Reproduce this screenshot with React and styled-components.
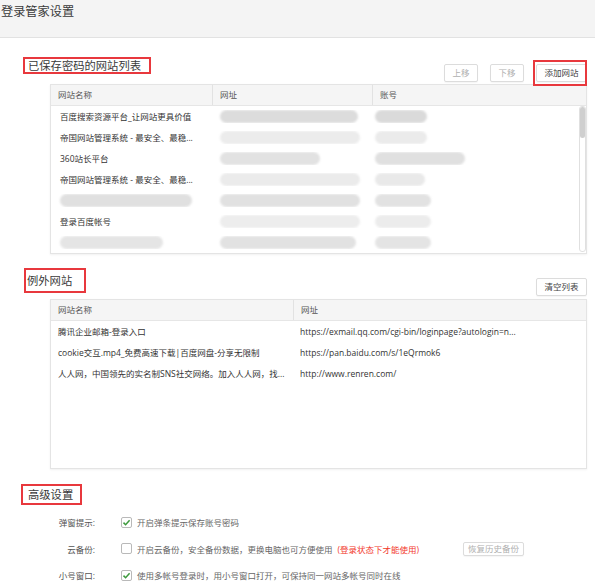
import React from "react";
import styled, { createGlobalStyle } from "styled-components";

const Global = createGlobalStyle`
  html, body { margin: 0; padding: 0; background: #fff; }
  body { font-family: "Open Sans", "Noto Sans CJK SC", sans-serif; color: #333; }
`;

const Page = styled.div`
  width: 595px;
  height: 586px;
  overflow: hidden;
  background: #fff;
`;

const TopBar = styled.header`
  height: 38px;
  box-sizing: border-box;
  background: #f4f4f4;
  border-bottom: 1px solid #e2e2e2;
  padding: 4px 0 0 1px;
  font-size: 12.2px;
  line-height: 16px;
  color: #3a3a3a;
`;

const Section = styled.section`
  padding: ${(p) => p.$pt}px 8px 0 0;
`;

const SectionHead = styled.div`
  display: flex;
  justify-content: space-between;
  align-items: flex-start;
  height: ${(p) => p.$h}px;
`;

const SectionTitle = styled.h2`
  margin: 0 0 0 ${(p) => p.$ml}px;
  font-weight: normal;
  font-size: 11.3px;
  color: #3a3a3a;
  border: 2px solid #e8383d;
  line-height: ${(p) => p.$lh}px;
  padding: 0 ${(p) => p.$pr}px 0 ${(p) => p.$pl}px;
  background: #fff;
`;

const Toolbar = styled.div`
  align-self: flex-end;
  margin-bottom: ${(p) => p.$mb}px;
  display: flex;
  gap: 12px;
`;

const Button = styled.button`
  position: relative;
  height: ${(p) => p.$h || 18}px;
  box-sizing: border-box;
  border: 1px solid #dcdcdc;
  border-radius: 2px;
  background: #fff;
  font-family: inherit;
  font-size: 8.5px;
  line-height: 1;
  color: ${(p) => (p.$disabled ? "#b0b0b0" : "#444")};
  padding: 0 7.5px;
  box-shadow: 0 1px 1px rgba(0, 0, 0, 0.04);
  ${(p) =>
    p.$marked &&
    `
    &::after {
      content: "";
      position: absolute;
      top: -5px; left: -4px; right: -1px; bottom: -5px;
      border: 2px solid #e8383d;
    }
  `}
`;

const Table = styled.div`
  margin-left: 50px;
  border: 1px solid #e4e4e4;
  box-shadow: 0 1px 2px rgba(0, 0, 0, 0.06);
  background: #fff;
`;

const HeadRow = styled.div`
  display: grid;
  grid-template-columns: ${(p) => p.$cols};
  height: 20px;
  background: #f5f5f5;
  border-bottom: 1px solid #e6e6e6;
`;

const HeadCell = styled.div`
  padding-left: 7px;
  font-size: 8.5px;
  line-height: 20px;
  color: #555;
  & + & {
    border-left: 1px solid #e2e2e2;
  }
`;

const Body = styled.div`
  display: flex;
  min-height: ${(p) => p.$minH || 0}px;
`;

const Rows = styled.div`
  flex: 1;
`;

const Row = styled.div`
  display: grid;
  grid-template-columns: ${(p) => p.$cols};
  height: 21px;
  align-items: center;
`;

const Cell = styled.div`
  padding-left: ${(p) => p.$pl ?? 8}px;
  font-size: 8.5px;
  line-height: 12px;
  color: #333;
  white-space: nowrap;
  overflow: hidden;
`;

const Blob = styled.span`
  display: block;
  height: 13px;
  width: ${(p) => p.$w}px;
  margin-left: ${(p) => p.$x || 0}px;
  background: ${(p) => p.$c};
  border-radius: 7px;
  filter: blur(0.8px);
`;

const Scroll = styled.div`
  width: 7px;
  margin: 0 0 1px 0;
  border: 1px solid #e0e0e0;
  border-radius: 3px;
  box-sizing: border-box;
  display: flex;
  flex-direction: column;
`;

const Thumb = styled.div`
  height: 31px;
  background: #cfcfcf;
  border-radius: 3px;
`;

const Settings = styled.div`
  margin-top: 4px;
`;

const SettingRow = styled.div`
  display: flex;
  align-items: center;
  height: 26.5px;
  font-size: 8.5px;
`;

const Label = styled.div`
  width: 95px;
  text-align: right;
  color: #555;
`;

const Check = styled.span`
  width: 11px;
  height: 11px;
  box-sizing: border-box;
  margin-left: 26px;
  border: 1px solid #b9b9b9;
  border-radius: 2px;
  background: #fff;
  display: flex;
  align-items: center;
  justify-content: center;
`;

const SettingText = styled.span`
  margin-left: 5px;
  color: #666;
`;

const Note = styled.span`
  margin-left: 5px;
  color: #f2382c;
`;

const SmallButton = styled(Button)`
  margin-left: 44px;
  padding: 0 4px;
`;

const CheckBox = ({ checked }) => (
  <Check>
    {checked && (
      <svg width="9" height="9" viewBox="0 0 9 9">
        <polyline points="1.5,4.6 3.6,6.7 7.6,2.2" fill="none" stroke="#3d9a3d" strokeWidth="1.5" />
      </svg>
    )}
  </Check>
);

const cols1 = "161px 160px 1fr";
const cols2 = "242px 1fr";

const saved = [
  { name: "百度搜索资源平台_让网站更具价值", url: { w: 138, c: "#dcdcdc" }, acc: { w: 52, c: "#dadada" } },
  { name: "帝国网站管理系统 - 最安全、最稳...", url: { w: 140, c: "#ececec" }, acc: { w: 52, c: "#ebebeb" } },
  { name: "360站长平台", url: { w: 100, c: "#e2e2e2" }, acc: { w: 90, c: "#e0e0e0" } },
  { name: "帝国网站管理系统 - 最安全、最稳...", url: { w: 140, c: "#ebebeb" }, acc: { w: 50, c: "#e9e9e9" } },
  { blobName: { w: 132, c: "#e0e0e0" }, url: { w: 140, c: "#e1e1e1" }, acc: { w: 56, c: "#e2e2e2" } },
  { name: "登录百度帐号", url: { w: 140, c: "#ededed" }, acc: { w: 56, c: "#ececec" } },
  { blobName: { w: 103, c: "#e5e5e5" }, url: { w: 136, c: "#e2e2e2" }, acc: { w: 56, c: "#e4e4e4" } },
];

const excluded = [
  { name: "腾讯企业邮箱-登录入口", url: "https://exmail.qq.com/cgi-bin/loginpage?autologin=n..." },
  { name: "cookie交互.mp4_免费高速下载|百度网盘-分享无限制", url: "https://pan.baidu.com/s/1eQrmok6" },
  { name: "人人网，中国领先的实名制SNS社交网络。加入人人网，找...", url: "http://www.renren.com/" },
];

export default function App() {
  return (
    <Page>
      <Global />
      <TopBar>登录管家设置</TopBar>

      <Section $pt={19}>
        <SectionHead $h={27}>
          <SectionTitle $ml={23} $lh={13} $pl={3} $pr={8}>
            已保存密码的网站列表
          </SectionTitle>
          <Toolbar $mb={2}>
            <Button $disabled>上移</Button>
            <Button $disabled>下移</Button>
            <Button $marked>添加网站</Button>
          </Toolbar>
        </SectionHead>
        <Table>
          <HeadRow $cols={cols1}>
            <HeadCell>网站名称</HeadCell>
            <HeadCell>网址</HeadCell>
            <HeadCell>账号</HeadCell>
          </HeadRow>
          <Body>
            <Rows>
              {saved.map((r, i) => (
                <Row key={i} $cols={cols1}>
                  <Cell $pl={9}>
                    {r.name ? r.name : <Blob $w={r.blobName.w} $c={r.blobName.c} />}
                  </Cell>
                  <Cell $pl={8}>
                    <Blob $w={r.url.w} $c={r.url.c} />
                  </Cell>
                  <Cell $pl={3}>
                    <Blob $w={r.acc.w} $c={r.acc.c} />
                  </Cell>
                </Row>
              ))}
            </Rows>
            <Scroll>
              <Thumb />
            </Scroll>
          </Body>
        </Table>
      </Section>

      <Section $pt={14}>
        <SectionHead $h={31}>
          <SectionTitle $ml={24} $lh={21} $pl={1} $pr={12}>
            例外网站
          </SectionTitle>
          <Toolbar $mb={3}>
            <Button>清空列表</Button>
          </Toolbar>
        </SectionHead>
        <Table>
          <HeadRow $cols={cols2}>
            <HeadCell>网站名称</HeadCell>
            <HeadCell>网址</HeadCell>
          </HeadRow>
          <Body $minH={147}>
            <Rows>
              {excluded.map((r, i) => (
                <Row key={i} $cols={cols2}>
                  <Cell $pl={7}>{r.name}</Cell>
                  <Cell $pl={7}>{r.url}</Cell>
                </Row>
              ))}
            </Rows>
          </Body>
        </Table>
      </Section>

      <Section $pt={15}>
        <SectionHead $h={21}>
          <SectionTitle $ml={21} $lh={17} $pl={5} $pr={7}>
            高级设置
          </SectionTitle>
        </SectionHead>
        <Settings>
          <SettingRow>
            <Label>弹窗提示:</Label>
            <CheckBox checked />
            <SettingText>开启弹条提示保存账号密码</SettingText>
          </SettingRow>
          <SettingRow>
            <Label>云备份:</Label>
            <CheckBox />
            <SettingText>开启云备份，安全备份数据，更换电脑也可方便使用</SettingText>
            <Note>(登录状态下才能使用)</Note>
            <SmallButton $disabled $h={14}>恢复历史备份</SmallButton>
          </SettingRow>
          <SettingRow>
            <Label>小号窗口:</Label>
            <CheckBox checked />
            <SettingText>使用多帐号登录时，用小号窗口打开，可保持同一网站多帐号同时在线</SettingText>
          </SettingRow>
        </Settings>
      </Section>
    </Page>
  );
}
